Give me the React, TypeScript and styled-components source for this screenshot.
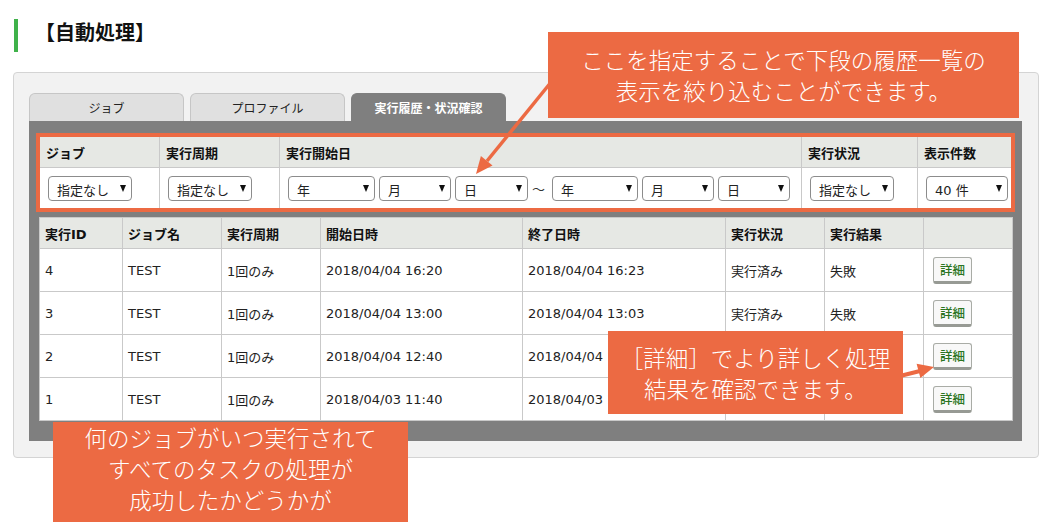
import React from "react";
import styled, { createGlobalStyle, css } from "styled-components";

const ORANGE = "#ec6a43";

const GlobalStyle = createGlobalStyle`
  html, body { margin: 0; padding: 0; background: #ffffff; }
  body {
    font-family: "DejaVu Sans", "Noto Sans CJK JP", sans-serif;
    color: #222;
  }
`;

const Page = styled.div`
  position: relative;
  width: 1052px;
  height: 522px;
  overflow: hidden;
  box-sizing: border-box;
  padding: 19px 13px 0 13px;
`;

const Title = styled.h2`
  margin: 0 0 0 1px;
  height: 33px;
  box-sizing: border-box;
  border-left: 4px solid #3fb24a;
  padding-left: 17px;
  font: 700 20px/26px "Noto Sans CJK JP", sans-serif;
  color: #111;
`;

const Panel = styled.section`
  margin-top: 20px;
  width: 1026px;
  box-sizing: border-box;
  border: 1px solid #d4d4d4;
  border-radius: 4px;
  background: #f2f2f2;
  padding: 20px 16px 16px 15px;
`;

const TabBar = styled.div`
  display: flex;
  gap: 6px;
  height: 28px;
`;

const Tab = styled.div<{ $active?: boolean }>`
  width: 155px;
  box-sizing: border-box;
  display: flex;
  align-items: center;
  justify-content: center;
  border: 1px solid #c6c6c6;
  border-bottom: none;
  border-radius: 6px 6px 0 0;
  background: #e0e0e0;
  font-family: "Noto Sans CJK JP", sans-serif;
  font-size: 12px;
  color: #222;
  ${(p) =>
    p.$active &&
    css`
      background: #7f7f7f;
      border-color: #7f7f7f;
      color: #fff;
      font-weight: 700;
    `}
`;

const TabBody = styled.div`
  background: #7f7f7f;
  padding: 15px 10px 20px 10px;
`;

const FilterFrame = styled.div`
  outline: 4px solid ${ORANGE};
  outline-offset: -1px;
`;

const BaseTable = styled.table`
  width: 100%;
  table-layout: fixed;
  border-collapse: collapse;
  background: #fff;
  font-size: 13px;

  th, td {
    border: 1px solid #c9c9c9;
    text-align: left;
    vertical-align: middle;
    white-space: nowrap;
  }
  th {
    background: #e6e8e4;
    font-weight: 700;
    color: #111;
  }
`;

const Col = styled.col<{ $w: number }>`
  width: ${(p) => p.$w}px;
`;

const FilterTable = styled(BaseTable)`
  th { height: 30px; padding: 0 6px; }
  td { height: 40px; padding: 0 8px; }
`;

const HistoryTable = styled(BaseTable)`
  margin-top: 8px;
  th { height: 30px; padding: 0 5px; }
  td { height: 42px; padding: 0 5px; color: #222; }
`;

const SelectBox = styled.div<{ $w: number }>`
  display: inline-flex;
  align-items: center;
  justify-content: space-between;
  box-sizing: border-box;
  width: ${(p) => p.$w}px;
  height: 25px;
  border: 1px solid #8c8c8c;
  border-radius: 4px;
  background: #fff;
  padding: 0 5px 0 8px;
  font-size: 13px;
  color: #222;
  vertical-align: middle;
`;

const SelectText = styled.span`
  padding-top: 3px;
`;

const Caret = styled.span`
  width: 0;
  height: 0;
  border-left: 3.5px solid transparent;
  border-right: 3.5px solid transparent;
  border-top: 7px solid #111;
`;

const DateRange = styled.div`
  display: flex;
  align-items: center;
  gap: 4px;
`;

const Tilde = styled.span`
  font-family: "Noto Sans CJK JP", sans-serif;
  font-size: 13px;
  color: #333;
  margin-right: 3px;
`;

const DetailButton = styled.button`
  box-sizing: border-box;
  height: 27px;
  margin-left: 4px;
  padding: 0 6px;
  border: 1px solid #a9aca6;
  border-bottom: 3px solid #979a94;
  border-radius: 3px;
  background: #f8f8f8;
  font-family: "Noto Sans CJK JP", sans-serif;
  font-size: 12.5px;
  font-weight: 500;
  color: #2a7420;
  cursor: pointer;
`;

const ArrowLayer = styled.svg`
  position: absolute;
  left: 0;
  top: 0;
  width: 1052px;
  height: 522px;
  pointer-events: none;
`;

const Callout = styled.div<{ $left: number; $top: number; $w: number; $h: number; $align?: string }>`
  position: absolute;
  left: ${(p) => p.$left}px;
  top: ${(p) => p.$top}px;
  width: ${(p) => p.$w}px;
  height: ${(p) => p.$h}px;
  box-sizing: border-box;
  background: ${ORANGE};
  color: #fff;
  display: flex;
  flex-direction: column;
  align-items: center;
  justify-content: ${(p) => p.$align ?? "center"};
  font-family: "Noto Sans CJK JP", sans-serif;
  font-size: 22.5px;
  font-weight: 300;
  line-height: 31px;
  text-align: center;
`;

const CalloutLine = styled.div`
  white-space: nowrap;
`;

function Select({ w, label }: { w: number; label: string }) {
  return (
    <SelectBox $w={w}>
      <SelectText>{label}</SelectText>
      <Caret />
    </SelectBox>
  );
}

const rows = [
  { id: "4", name: "TEST", cycle: "1回のみ", start: "2018/04/04 16:20", end: "2018/04/04 16:23", status: "実行済み", result: "失敗" },
  { id: "3", name: "TEST", cycle: "1回のみ", start: "2018/04/04 13:00", end: "2018/04/04 13:03", status: "実行済み", result: "失敗" },
  { id: "2", name: "TEST", cycle: "1回のみ", start: "2018/04/04 12:40", end: "2018/04/04 12:43", status: "実行済み", result: "失敗" },
  { id: "1", name: "TEST", cycle: "1回のみ", start: "2018/04/03 11:40", end: "2018/04/03 11:43", status: "実行済み", result: "失敗" },
];

const filterCols = [120, 120, 522, 116, 95];
const historyCols = [83, 99, 99, 202, 203, 99, 99, 89];
const historyHeads = ["実行ID", "ジョブ名", "実行周期", "開始日時", "終了日時", "実行状況", "実行結果", ""];

export default function App() {
  return (
    <>
      <GlobalStyle />
      <Page>
        <Title>【自動処理】</Title>
        <Panel>
          <TabBar>
            <Tab>ジョブ</Tab>
            <Tab>プロファイル</Tab>
            <Tab $active>実行履歴・状況確認</Tab>
          </TabBar>
          <TabBody>
            <FilterFrame>
              <FilterTable>
                <colgroup>
                  {filterCols.map((w, i) => (
                    <Col key={i} $w={w} />
                  ))}
                </colgroup>
                <thead>
                  <tr>
                    <th>ジョブ</th>
                    <th>実行周期</th>
                    <th>実行開始日</th>
                    <th>実行状況</th>
                    <th>表示件数</th>
                  </tr>
                </thead>
                <tbody>
                  <tr>
                    <td><Select w={84} label="指定なし" /></td>
                    <td><Select w={84} label="指定なし" /></td>
                    <td>
                      <DateRange>
                        <Select w={87} label="年" />
                        <Select w={72} label="月" />
                        <Select w={73} label="日" />
                        <Tilde>～</Tilde>
                        <Select w={86} label="年" />
                        <Select w={72} label="月" />
                        <Select w={72} label="日" />
                      </DateRange>
                    </td>
                    <td><Select w={84} label="指定なし" /></td>
                    <td><Select w={82} label="40 件" /></td>
                  </tr>
                </tbody>
              </FilterTable>
            </FilterFrame>
            <HistoryTable>
              <colgroup>
                {historyCols.map((w, i) => (
                  <Col key={i} $w={w} />
                ))}
              </colgroup>
              <thead>
                <tr>
                  {historyHeads.map((h, i) => (
                    <th key={i}>{h}</th>
                  ))}
                </tr>
              </thead>
              <tbody>
                {rows.map((r) => (
                  <tr key={r.id}>
                    <td>{r.id}</td>
                    <td>{r.name}</td>
                    <td>{r.cycle}</td>
                    <td>{r.start}</td>
                    <td>{r.end}</td>
                    <td>{r.status}</td>
                    <td>{r.result}</td>
                    <td><DetailButton>詳細</DetailButton></td>
                  </tr>
                ))}
              </tbody>
            </HistoryTable>
          </TabBody>
        </Panel>

        <ArrowLayer viewBox="0 0 1052 522">
          <line x1="552" y1="81" x2="487" y2="161" stroke={ORANGE} strokeWidth="3.5" />
          <polygon points="476,174 480.9,156.1 492.5,165.5" fill={ORANGE} />
          <line x1="900" y1="376" x2="920" y2="371" stroke={ORANGE} strokeWidth="4" />
          <polygon points="934,367 916.6,363.7 920.4,378.1" fill={ORANGE} />
        </ArrowLayer>

        <Callout $left={548} $top={32} $w={471} $h={86}>
          <CalloutLine>ここを指定することで下段の履歴一覧の</CalloutLine>
          <CalloutLine>表示を絞り込むことができます。</CalloutLine>
        </Callout>
        <Callout $left={608} $top={331} $w={295} $h={83}>
          <CalloutLine>［詳細］でより詳しく処理</CalloutLine>
          <CalloutLine>結果を確認できます。</CalloutLine>
        </Callout>
        <Callout $left={53} $top={422} $w={355} $h={100} $align="flex-start">
          <CalloutLine>何のジョブがいつ実行されて</CalloutLine>
          <CalloutLine>すべてのタスクの処理が</CalloutLine>
          <CalloutLine>成功したかどうかが</CalloutLine>
        </Callout>
      </Page>
    </>
  );
}
